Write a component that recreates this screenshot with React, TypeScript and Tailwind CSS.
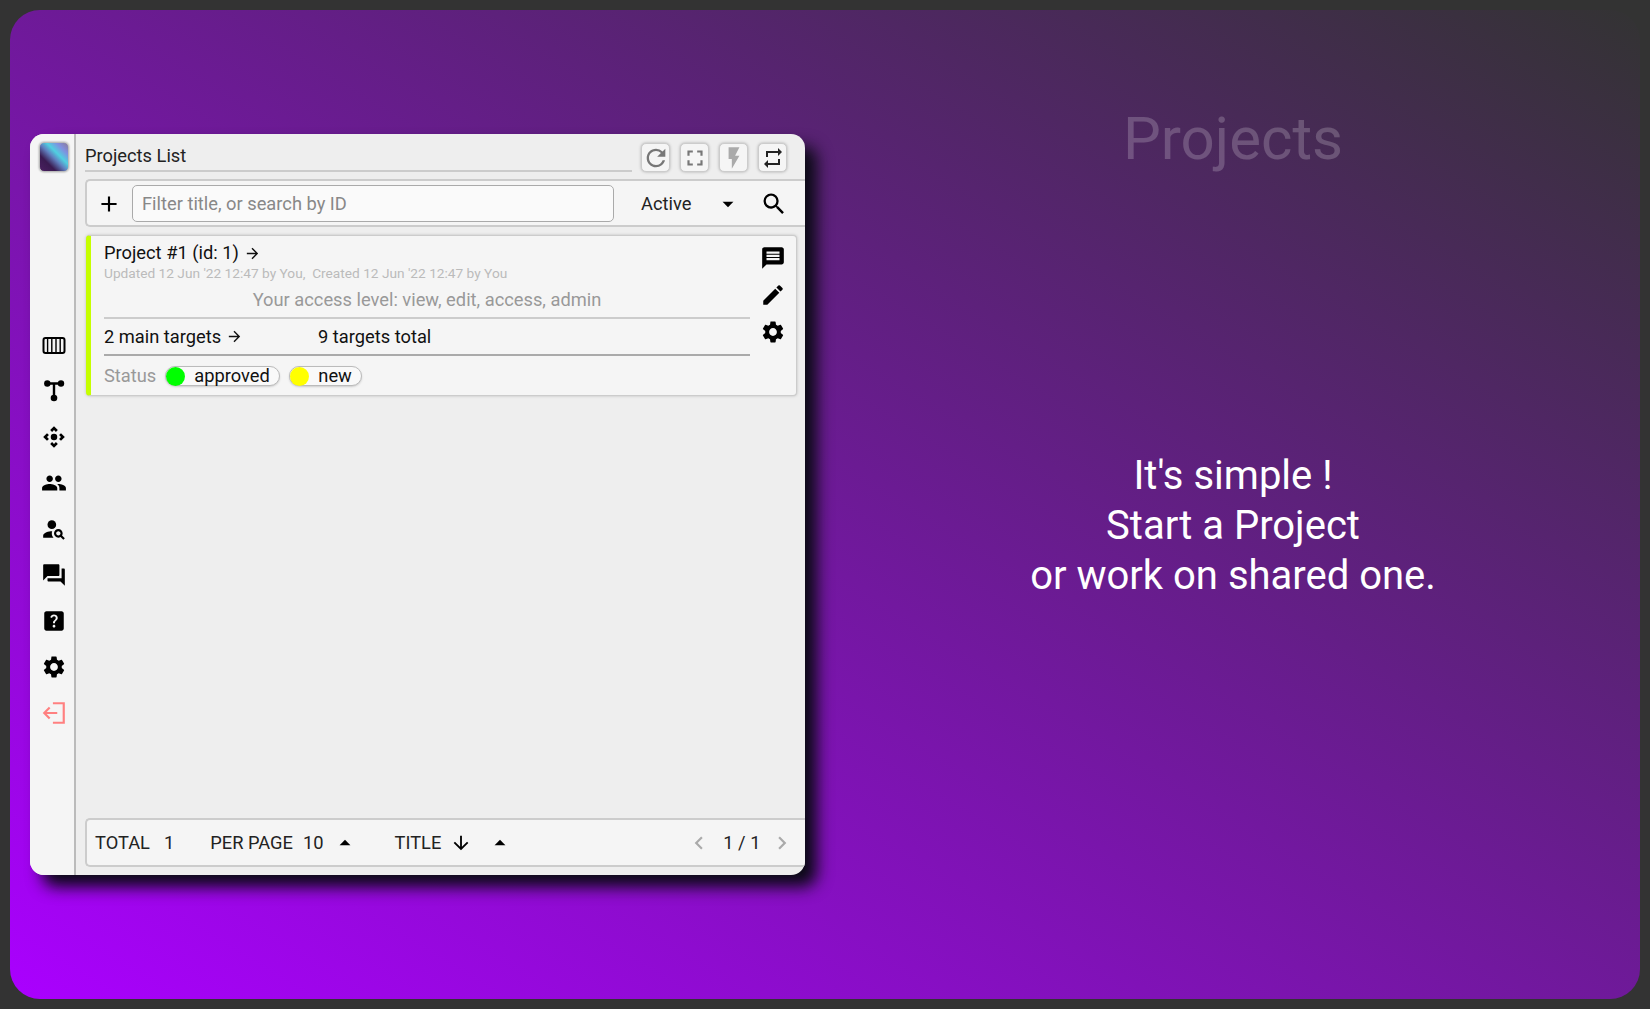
import {
  MdAdd,
  MdArrowDownward,
  MdArrowDropDown,
  MdArrowDropUp,
  MdArrowForward,
  MdChevronLeft,
  MdChevronRight,
  MdControlCamera,
  MdEdit,
  MdFlashOn,
  MdFullscreen,
  MdHelpCenter,
  MdMessage,
  MdPeople,
  MdPersonSearch,
  MdQuestionAnswer,
  MdRefresh,
  MdRepeat,
  MdSearch,
  MdSettings,
} from "react-icons/md";

function Columns() {
  return (
    <svg viewBox="0 0 26 26" className="w-[26px] h-[26px]" fill="none" stroke="black">
      <rect x="2.5" y="6" width="21" height="15" rx="2" strokeWidth="2" />
      <path d="M6.6 6.5v14M10.8 6.5v14M15 6.5v14M19.2 6.5v14" strokeWidth="1.4" />
    </svg>
  );
}

function Tree() {
  return (
    <svg viewBox="0 0 26 26" className="w-[26px] h-[26px]" fill="black" stroke="black">
      <circle cx="6.3" cy="5.5" r="3.2" stroke="none" />
      <circle cx="20" cy="5.5" r="3.2" stroke="none" />
      <circle cx="13" cy="20" r="3.3" stroke="none" />
      <path d="M6 5.5h14M13 5.5v14" strokeWidth="2.4" />
    </svg>
  );
}

function Exit() {
  return (
    <svg viewBox="0 0 24 24" className="w-[26px] h-[26px]" fill="none" stroke="#ff8080" strokeWidth="2">
      <path d="M11 3h10v18H11M15 12H3M8 7l-5 5 5 5" />
    </svg>
  );
}

function ToolButton({ children }: { children: React.ReactNode }) {
  return (
    <button className="w-[29px] h-[29px] grid place-items-center rounded-[5px] border border-[#ccc] bg-[#f5f5f5] shadow-[0_0_3px_#aaa]">
      {children}
    </button>
  );
}

function Pill({ color, label, className }: { color: string; label: string; className: string }) {
  return (
    <span className={`flex items-center h-[20px] rounded-full border border-[#bbb] bg-[#f9f9f9] shadow-[0_1px_2px_#ccc] ${className}`}>
      <span className="w-[19px] h-[19px] rounded-full" style={{ backgroundColor: color }} />
      <span className="text-[18.3px] leading-none text-[#111] ml-[9px]">{label}</span>
    </span>
  );
}

export default function App() {
  return (
    <div className="h-[1009px] bg-[#333] p-[10px] font-['Roboto',sans-serif] overflow-hidden">
      <div className="h-[989px] rounded-[30px] bg-[linear-gradient(to_top_right,#aa00ff,#333)] pt-[124px] pl-[20px] flex">
        {/* Panel */}
        <div className="w-[775px] h-[741px] flex rounded-[14px] bg-[#eee] shadow-[12px_12px_16px_#0a0a14] overflow-hidden">
          <aside className="w-[46px] shrink-0 bg-[#f5f5f5] border-r-2 border-[#bbb] flex flex-col items-center pt-[8px] pl-[4px]">
            <div className="w-[30px] h-[30px] rounded-[5px] border border-[#bbb] shadow-[0_0_2px_#888] bg-[linear-gradient(to_bottom_left,#8a7a9a_0%,#8090e0_20%,#50d0e0_38%,#6080c0_52%,#3a1a50_72%,#4a2060_100%)]" />
            <nav className="mt-[160px] flex flex-col items-center gap-[20px] text-black">
              <Columns />
              <Tree />
              <MdControlCamera size={26} />
              <MdPeople size={26} />
              <MdPersonSearch size={26} />
              <MdQuestionAnswer size={26} />
              <MdHelpCenter size={26} />
              <MdSettings size={26} />
              <Exit />
            </nav>
          </aside>

          <main className="flex-1 min-w-0 pl-[9px] flex flex-col">
            {/* Title bar */}
            <div className="h-[45px] shrink-0 flex items-start pt-[9px]">
              <h1 className="w-[547px] h-[29px] border-b-2 border-[#ccc] text-[18.3px] leading-[26px] text-[#222]">
                Projects List
              </h1>
              <div className="ml-[9px] flex gap-[10px]">
                <ToolButton>
                  <MdRefresh size={28} className="text-[#777]" />
                </ToolButton>
                <ToolButton>
                  <MdFullscreen size={26} className="text-[#777]" />
                </ToolButton>
                <ToolButton>
                  <MdFlashOn size={26} className="text-[#aaa]" />
                </ToolButton>
                <ToolButton>
                  <MdRepeat size={24} className="text-[#222]" />
                </ToolButton>
              </div>
            </div>

            {/* Search row */}
            <div className="h-[48px] shrink-0 flex items-center bg-[#f5f5f5] border-y-2 border-l-2 border-[#ccc] rounded-l-[5px]">
              <MdAdd size={26} className="ml-[9px] mt-[2px] text-black" />
              <input
                placeholder="Filter title, or search by ID"
                className="ml-[10px] w-[482px] h-[37px] px-[9px] rounded-[5px] border border-[#aaa] bg-[#fafafa] text-[18.3px] placeholder:text-[#888] outline-none"
              />
              <span className="ml-[27px] mt-[2px] text-[18.3px] text-[#222]">Active</span>
              <MdArrowDropDown size={26} className="ml-[24px] mt-[2px] text-black" />
              <MdSearch size={28} className="ml-[19px] mt-[2px] text-black" />
            </div>

            {/* Card */}
            <div className="mt-[8px] ml-[1px] w-[711px] h-[161px] shrink-0 flex bg-[#f5f5f5] rounded-[4px] border-l-[5px] border-l-[#c6ff00] border-y border-r border-y-[#ccc] border-r-[#ccc] shadow-[0_0_3px_#bbb]">
              <div className="w-[646px] ml-[13px] shrink-0">
                <div className="mt-[7px] flex items-center h-[20px] text-[18.3px] text-[#111]">
                  Project #1 (id: 1)
                  <MdArrowForward size={17} className="ml-[5px]" />
                </div>
                <div className="h-[18px] text-[13.7px] leading-[20px] text-[#bbb] whitespace-pre">
                  {"Updated 12 Jun '22 12:47 by You,  Created 12 Jun '22 12:47 by You"}
                </div>
                <div className="h-[35px] text-[18.3px] leading-[32px] text-center text-[#999] border-b-2 border-[#ccc] mt-[3px]">
                  Your access level: view, edit, access, admin
                </div>
                <div className="h-[37px] flex items-center text-[18.3px] text-[#111] border-b-2 border-[#aaa]">
                  <span className="w-[214px] flex items-center">
                    2 main targets
                    <MdArrowForward size={17} className="ml-[5px]" />
                  </span>
                  9 targets total
                </div>
                <div className="h-[40px] flex items-center text-[18.3px] text-[#999]">
                  Status
                  <Pill color="#00ff00" label="approved" className="ml-[9px] w-[115px]" />
                  <Pill color="#ffff00" label="new" className="ml-[9px] w-[73px]" />
                </div>
              </div>
              <div className="ml-[10px] flex flex-col items-center gap-[11px] pt-[9px] text-black">
                <MdMessage size={26} />
                <MdEdit size={26} />
                <MdSettings size={26} />
              </div>
            </div>

            <div className="flex-1" />

            {/* Footer */}
            <div className="h-[49px] shrink-0 mb-[8px] flex items-center bg-[#f5f5f5] border-y-2 border-l-2 border-[#ccc] rounded-l-[5px] text-[18.3px] text-[#222]">
              <span className="ml-[8px]">TOTAL</span>
              <span className="ml-[14px]">1</span>
              <span className="ml-[36px]">PER PAGE</span>
              <span className="ml-[10px]">10</span>
              <MdArrowDropUp size={26} className="ml-[8px] text-black" />
              <span className="ml-[37px]">TITLE</span>
              <MdArrowDownward size={22} className="ml-[9px] text-black" />
              <MdArrowDropUp size={26} className="ml-[15px] text-black" />
              <MdChevronLeft size={26} className="ml-[173px] text-[#aaa]" />
              <span className="ml-[11px]">1 / 1</span>
              <MdChevronRight size={26} className="ml-[9px] text-[#aaa]" />
            </div>
          </main>
        </div>

        {/* Right text */}
        <div className="flex-1 flex flex-col items-center text-center pl-[21px]">
          <h2 className="text-[60px] leading-[70px] -mt-[30px] text-white/20">Projects</h2>
          <p className="mt-[277px] text-[40px] leading-[50px] text-white">
            It's simple !
            <br />
            Start a Project
            <br />
            or work on shared one.
          </p>
        </div>
      </div>
    </div>
  );
}
